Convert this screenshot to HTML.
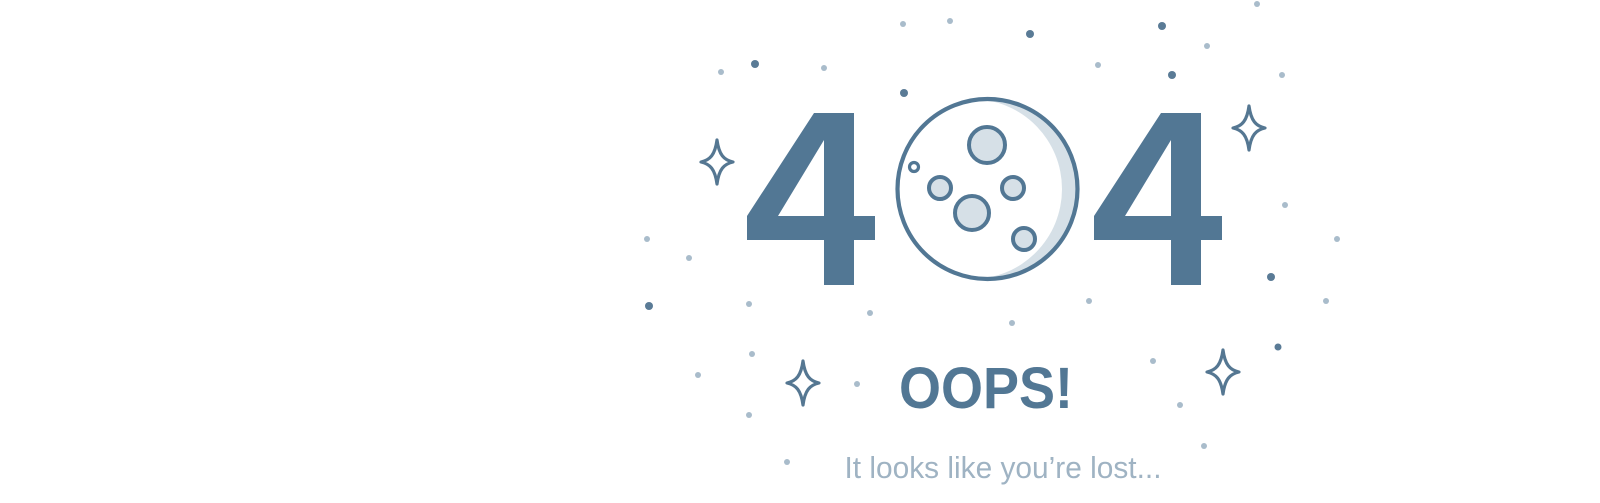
<!DOCTYPE html>
<html><head><meta charset="utf-8"><style>
html,body{margin:0;padding:0;background:#fff;width:1600px;height:503px;overflow:hidden}
svg{display:block}
</style></head><body>
<svg width="1600" height="503" viewBox="0 0 1600 503" xmlns="http://www.w3.org/2000/svg">
<defs>
<path id="sp" d="M0,-22 C2,-7 7,-2 16,0 C7,2 2,7 0,22 C-2,7 -7,2 -16,0 C-7,-2 -2,-7 0,-22 Z" fill="none" stroke="#557792" stroke-width="3.2" stroke-linejoin="round"/>
<clipPath id="mc"><circle cx="987.5" cy="189" r="90"/></clipPath>
</defs>
<g fill="#a9bccb">
<circle cx="903" cy="24" r="3"/><circle cx="950" cy="21" r="3"/><circle cx="1257" cy="4" r="3"/><circle cx="1207" cy="46" r="3"/>
<circle cx="721" cy="72" r="3"/><circle cx="824" cy="68" r="3"/><circle cx="1098" cy="65" r="3"/><circle cx="1282" cy="75" r="3"/>
<circle cx="1285" cy="205" r="3"/><circle cx="647" cy="239" r="3"/><circle cx="689" cy="258" r="3"/><circle cx="1337" cy="239" r="3"/>
<circle cx="749" cy="304" r="3"/><circle cx="870" cy="313" r="3"/><circle cx="1089" cy="301" r="3"/><circle cx="1012" cy="323" r="3"/>
<circle cx="1326" cy="301" r="3"/><circle cx="752" cy="354" r="3"/><circle cx="698" cy="375" r="3"/><circle cx="857" cy="384" r="3"/>
<circle cx="1153" cy="361" r="3"/><circle cx="1180" cy="405" r="3"/><circle cx="749" cy="415" r="3"/><circle cx="1204" cy="446" r="3"/><circle cx="787" cy="462" r="3"/>
</g>
<g fill="#5a7b96">
<circle cx="1030" cy="34" r="4"/><circle cx="1162" cy="26" r="4"/><circle cx="755" cy="64" r="4"/><circle cx="1172" cy="75" r="4"/>
<circle cx="904" cy="93" r="4"/><circle cx="1271" cy="277" r="4"/><circle cx="649" cy="306" r="4"/><circle cx="1278" cy="347" r="3.5"/>
</g>
<use href="#sp" x="717" y="162"/>
<use href="#sp" x="1249" y="128"/>
<use href="#sp" x="803" y="383"/>
<use href="#sp" x="1223" y="372"/>
<path fill="#527794" fill-rule="evenodd" d="M814,113 L854,113 L854,216 L875,216 L875,240 L854,240 L854,285 L824,285 L824,240 L747,240 L747,216 Z M824,140 L778,216 L824,216 Z"/>
<path fill="#527794" fill-rule="evenodd" transform="translate(347,0)" d="M814,113 L854,113 L854,216 L875,216 L875,240 L854,240 L854,285 L824,285 L824,240 L747,240 L747,216 Z M824,140 L778,216 L824,216 Z"/>
<g clip-path="url(#mc)">
<circle cx="987.5" cy="189" r="92" fill="#d6e0e7"/>
<circle cx="972" cy="189" r="90" fill="#fff"/>
</g>
<circle cx="987.5" cy="189" r="90" fill="none" stroke="#527794" stroke-width="4.2"/>
<g fill="#d6e0e7" stroke="#527794" stroke-width="4">
<circle cx="987" cy="145" r="18"/>
<circle cx="940" cy="188" r="11"/>
<circle cx="1013" cy="188" r="11"/>
<circle cx="972" cy="213" r="17"/>
<circle cx="1024" cy="239" r="11"/>
<circle cx="914" cy="167" r="4.5" fill="#fff" stroke-width="3.2"/>
</g>
<text x="986" y="408" text-anchor="middle" font-family="Liberation Sans, sans-serif" font-weight="bold" font-size="58" fill="#527794" textLength="174" lengthAdjust="spacingAndGlyphs">OOPS!</text>
<text x="1003" y="478" text-anchor="middle" font-family="Liberation Sans, sans-serif" font-size="31" fill="#9fb3c3" textLength="317" lengthAdjust="spacingAndGlyphs">It looks like you’re lost...</text>
</svg>
</body></html>
